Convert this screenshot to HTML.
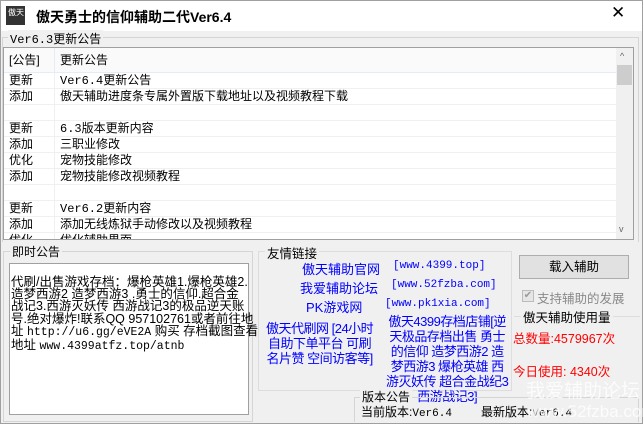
<!DOCTYPE html>
<html><head><meta charset="utf-8"><style>
*{margin:0;padding:0;box-sizing:border-box}
body{width:643px;height:424px;overflow:hidden;background:#f0f0f0;font-family:"Liberation Sans","Noto Sans CJK SC",sans-serif;font-size:12px;color:#000;position:relative}
.a{position:absolute;white-space:nowrap}
.m{font-family:"Liberation Mono","Noto Sans CJK SC",monospace}
.blue{color:#0000ff;font-size:13px}
.row{position:absolute;left:0;width:613px;height:16px;border-bottom:1px solid #f0f0f0;line-height:15px}
.row>span{position:absolute}
.row .c1{left:5px}.row .c2{left:56px}
.grp{position:absolute;border:1px solid #d5d5d5}
</style></head><body>
<div class="a" style="left:0;top:0;width:643px;height:424px;border:1px solid #a0a0a0"></div>
<div class="a" style="left:1px;top:1px;width:641px;height:30px;background:#fff"></div>
<div class="a" style="left:6px;top:6px;width:19px;height:19px;background:#333"><div style="color:#fff;font-size:8px;line-height:10px;padding:2px 2px">傲天</div></div>
<div class="a" style="left:36px;top:7px;font-size:14px;font-weight:bold">傲天勇士的信仰辅助二代Ver6.4</div>
<div class="a" style="left:611px;top:3px;font-size:17px">✕</div>
<div class="grp" style="left:2px;top:37px;width:637px;height:205px;border-bottom:none"></div>
<div class="a" style="left:8px;top:30px;background:#f0f0f0;padding:0 2px;font-size:12px"><span class="m">Ver6.3</span>更新公告</div>
<div class="a" style="left:3px;top:47px;width:631px;height:193px;background:#fff;border:1px solid #a0a0a0;overflow:hidden">
 <div class="a" style="left:0;top:0;width:612px;height:25px;background:#fafafa;border-bottom:1px solid #e5ecf7;line-height:25px"><span style="position:absolute;left:5px">[公告]</span><span style="position:absolute;left:50px;top:0;height:25px;border-left:1px solid #e5ecf7"></span><span style="position:absolute;left:56px">更新公告</span></div>
 <div class="a" style="left:50px;top:25px;height:170px;border-left:1px solid #f0f0f0"></div>
 <div class="row" style="top:25px"><span class="c1">更新</span><span class="c2"><span class="m">Ver6.4</span>更新公告</span></div>
 <div class="row" style="top:41px"><span class="c1">添加</span><span class="c2">傲天辅助进度条专属外置版下载地址以及视频教程下载</span></div>
 <div class="row" style="top:57px"></div>
 <div class="row" style="top:73px"><span class="c1">更新</span><span class="c2"><span class="m">6.3</span>版本更新内容</span></div>
 <div class="row" style="top:89px"><span class="c1">添加</span><span class="c2">三职业修改</span></div>
 <div class="row" style="top:105px"><span class="c1">优化</span><span class="c2">宠物技能修改</span></div>
 <div class="row" style="top:121px"><span class="c1">添加</span><span class="c2">宠物技能修改视频教程</span></div>
 <div class="row" style="top:137px"></div>
 <div class="row" style="top:153px"><span class="c1">更新</span><span class="c2"><span class="m">Ver6.2</span>更新内容</span></div>
 <div class="row" style="top:169px"><span class="c1">添加</span><span class="c2">添加无线炼狱手动修改以及视频教程</span></div>
 <div class="row" style="top:185px"><span class="c1">优化</span><span class="c2">优化辅助界面</span></div>
 <div class="a" style="left:612px;top:0;width:17px;height:191px;background:#f0f0f0"></div>
 <div class="a" style="left:616px;top:3px;font-size:9px;color:#666">^</div>
 <div class="a" style="left:613px;top:17px;width:15px;height:20px;background:#cdcdcd"></div>
 <div class="a" style="left:615px;top:176px;font-size:9px;color:#666">v</div>
</div>
<div class="grp" style="left:3px;top:251px;width:250px;height:171px"></div>
<div class="a" style="left:10px;top:243px;background:#f0f0f0;padding:0 2px;font-size:12px">即时公告</div>
<div class="a" style="left:9px;top:263px;width:240px;height:152px;background:#fff;border:1px solid #a0a0a0"></div>
<div class="a" style="left:11px;top:276px;font-size:12.5px;line-height:12.2px">代刷/出售游戏存档：爆枪英雄1.爆枪英雄2.<br>造梦西游2 造梦西游3 .勇士的信仰.超合金<br>战记3.西游灭妖传 西游战记3的极品逆天账<br>号.绝对爆炸!联系QQ 957102761或者前往地<br>址 <span class="m" style="font-size:11.5px">http://u6.gg/eVE2A</span> 购买 存档截图查看<br>地址 <span class="m" style="font-size:11.5px">www.4399atfz.top/atnb</span></div>
<div class="grp" style="left:258px;top:251px;width:254px;height:140px;border-color:#ddd"></div>
<div class="a" style="left:265px;top:243px;background:#f0f0f0;padding:0 2px;font-size:12.5px">友情链接</div>
<div class="a blue" style="left:302px;top:259px">傲天辅助官网</div>
<div class="a blue m" style="left:393px;top:260px;font-size:11px">[www.4399.top]</div>
<div class="a blue" style="left:300px;top:278px">我爱辅助论坛</div>
<div class="a blue m" style="left:391px;top:279px;font-size:11px">[www.52fzba.com]</div>
<div class="a blue" style="left:306px;top:297px">PK游戏网</div>
<div class="a blue m" style="left:385px;top:298px;font-size:11px">[www.pk1xia.com]</div>
<div class="a blue" style="left:266px;top:321px;line-height:15px;text-align:center;letter-spacing:-0.5px">傲天代刷网 [24小时<br>自助下单平台 可刷<br>名片赞 空间访客等]</div>
<div class="a blue" style="left:386px;top:314px;line-height:15px;text-align:center;letter-spacing:-0.5px">傲天4399存档店铺[逆<br>天极品存档出售 勇士<br>的信仰 造梦西游2 造<br>梦西游3 爆枪英雄 西<br>游灭妖传 超合金战纪3<br>西游战记3]</div>
<div class="a" style="left:519px;top:255px;width:110px;height:24px;border:1px solid #adadad;background:#e1e1e1;text-align:center;line-height:22px;font-size:12.5px">载入辅助</div>
<div class="a" style="left:522px;top:290px;width:12px;height:12px;border:1px solid #bcbcbc;background:#e6e6e6;color:#9a9a9a;font-size:10px;line-height:10px;text-align:center">✔</div>
<div class="a" style="left:537px;top:288px;color:#8a8a8a;font-size:12.5px">支持辅助的发展</div>
<div class="a" style="left:514px;top:316px;width:126px;border-top:1px solid #ddd"></div>
<div class="a" style="left:521px;top:307px;background:#f0f0f0;padding:0 2px;font-size:12.5px">傲天辅助使用量</div>
<div class="a" style="left:513px;top:328px;color:#ff0000;font-size:12.5px">总数量:4579967次</div>
<div class="a" style="left:513px;top:361px;color:#ff0000;font-size:12.5px">今日使用: 4340次</div>
<div class="grp" style="left:354px;top:397px;width:285px;height:25px;border-bottom:none"></div>
<div class="a" style="left:360px;top:388px;background:#f0f0f0;padding:0 2px;font-size:12px">版本公告</div>
<div class="a" style="left:361px;top:403px;font-size:12px">当前版本:<span class="m" style="font-size:11px">Ver6.4</span></div>
<div class="a" style="left:481px;top:403px;font-size:12px">最新版本:<span class="m" style="font-size:11px">Ver6.4</span></div>
<div class="a" style="left:526px;top:376px;color:#fff;opacity:.8;font-size:19px">我爱辅助论坛</div>
<div class="a" style="left:527px;top:402px;color:#fff;opacity:.8;font-size:17px">www.52fzba.com</div>
</body></html>
